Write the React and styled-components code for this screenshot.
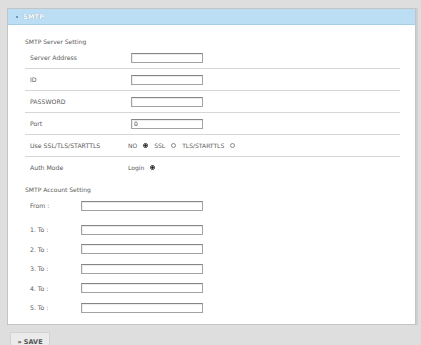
import React from 'react';
import styled, { createGlobalStyle } from 'styled-components';

const GlobalStyle = createGlobalStyle`
  html, body {
    margin: 0;
    padding: 0;
    background: #dedede;
  }
  body {
    font-family: "DejaVu Sans", Verdana, sans-serif;
    color: #4a4a4a;
  }
`;

const Page = styled.div`
  padding: 8px 5px 0 7px;
  height: 345px;
  box-sizing: border-box;
  overflow: hidden;
`;

const Panel = styled.div`
  background: #fff;
  border: 1px solid #c4c4c4;
  box-shadow: 2px 0 0 #cfcfcf;
`;

const Header = styled.div`
  height: 15px;
  display: flex;
  align-items: center;
  gap: 5px;
  padding-left: 8px;
  background: #bcdef5;
  border-bottom: 1px solid #a6cde8;
`;

const Bullet = styled.span`
  width: 2px;
  height: 2px;
  background: #5f7f96;
  border-radius: 50%;
`;

const HeaderTitle = styled.span`
  font-size: 6.5px;
  font-weight: bold;
  color: #fff;
  text-shadow: 0 0 1px #6b8aa0;
  letter-spacing: 0.2px;
`;

const Body = styled.div`
  padding: 13px 16px 6px 17px;
`;

const SectionTitle = styled.div`
  font-size: 6px;
  line-height: 8px;
  color: #5a5a5a;
  margin-top: ${p => p.$top || 0}px;
  margin-bottom: ${p => p.$bottom || 0}px;
`;

const ServerTable = styled.div`
  width: 375px;
`;

const ServerRow = styled.div`
  display: flex;
  align-items: center;
  height: 21px;
  border-bottom: 1px solid ${p => (p.$last ? 'transparent' : '#d6d6d6')};
`;

const AccountRow = styled.div`
  display: flex;
  align-items: center;
  height: ${p => p.$h || 19.5}px;
  margin-top: ${p => p.$top || 0}px;
`;

const Label = styled.div`
  width: ${p => p.$w}px;
  padding-left: 5px;
  box-sizing: border-box;
  font-size: 6.2px;
  color: #5a5a5a;
  white-space: nowrap;
`;

const TextInput = styled.input`
  width: ${p => p.$w}px;
  height: 10px;
  box-sizing: border-box;
  margin: 0;
  padding: 0 2px;
  border: 1px solid #a3a3a3;
  border-top-color: #858585;
  box-shadow: inset 1px 1px 0 #ececec;
  background: #fff;
  font-family: "DejaVu Sans", Verdana, sans-serif;
  font-size: 6px;
  color: #444;
  outline: none;
`;

const RadioGroup = styled.div`
  display: flex;
  align-items: center;
  gap: 6px;
`;

const RadioItem = styled.label`
  display: flex;
  align-items: center;
  gap: 6px;
  font-size: 6px;
  color: #5a5a5a;
`;

const Radio = styled.span`
  width: 5px;
  height: 5px;
  box-sizing: border-box;
  border-radius: 50%;
  border: 1px solid ${p => (p.$checked ? '#333' : '#8a8a8a')};
  background: ${p => (p.$checked ? 'radial-gradient(circle, #222 45%, #fff 60%)' : '#fff')};
`;

const Footer = styled.div`
  padding: 4px 0 0 3px;
`;

const SaveButton = styled.button`
  width: 40px;
  height: 19px;
  border: 1px solid #d2d2d2;
  background: #ebebeb;
  font-family: "DejaVu Sans", Verdana, sans-serif;
  font-size: 6.5px;
  font-weight: bold;
  color: #555;
  padding: 0;
  cursor: pointer;
`;

const serverFields = [
  { label: 'Server Address', value: '' },
  { label: 'ID', value: '' },
  { label: 'PASSWORD', value: '', type: 'password' },
  { label: 'Port', value: '0' },
];

const recipients = ['1. To :', '2. To :', '3. To :', '4. To :', '5. To :'];

export default function App() {
  return (
    <>
      <GlobalStyle />
      <Page>
        <Panel>
          <Header>
            <Bullet />
            <HeaderTitle>SMTP</HeaderTitle>
          </Header>
          <Body>
            <SectionTitle $bottom={1}>SMTP Server Setting</SectionTitle>
            <ServerTable>
              {serverFields.map(f => (
                <ServerRow key={f.label}>
                  <Label $w={106}>{f.label}</Label>
                  <TextInput $w={72} type={f.type || 'text'} defaultValue={f.value} />
                </ServerRow>
              ))}
              <ServerRow>
                <Label $w={103}>Use SSL/TLS/STARTTLS</Label>
                <RadioGroup>
                  <RadioItem>NO<Radio $checked /></RadioItem>
                  <RadioItem>SSL<Radio /></RadioItem>
                  <RadioItem>TLS/STARTTLS<Radio /></RadioItem>
                </RadioGroup>
              </ServerRow>
              <ServerRow $last>
                <Label $w={103}>Auth Mode</Label>
                <RadioGroup>
                  <RadioItem>Login<Radio $checked /></RadioItem>
                </RadioGroup>
              </ServerRow>
            </ServerTable>

            <SectionTitle $top={7}>SMTP Account Setting</SectionTitle>
            <AccountRow $h={19} $top={2}>
              <Label $w={56}>From :</Label>
              <TextInput $w={122} />
            </AccountRow>
            {recipients.map((r, i) => (
              <AccountRow key={r} $top={i === 0 ? 5 : 0}>
                <Label $w={56}>{r}</Label>
                <TextInput $w={122} />
              </AccountRow>
            ))}
          </Body>
        </Panel>
        <Footer>
          <SaveButton>» SAVE</SaveButton>
        </Footer>
      </Page>
    </>
  );
}
